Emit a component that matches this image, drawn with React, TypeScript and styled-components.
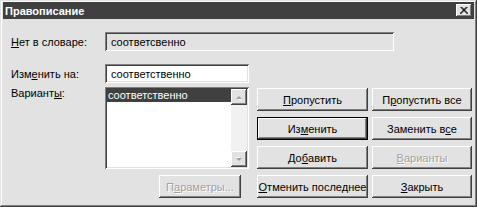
import styled, { createGlobalStyle, css } from "styled-components";

const FACE = "#e2e2e2";
const DARK = "#404040";
const SHADOW = "#808080";

const GlobalStyle = createGlobalStyle`
  html, body {
    margin: 0;
    padding: 0;
    background: ${FACE};
  }
  * {
    box-sizing: border-box;
  }
`;

const bevel = css`
  box-shadow: inset -1px -1px ${DARK}, inset 1px 1px #fff,
    inset -2px -2px ${SHADOW}, inset 2px 2px ${FACE};
`;

const sunken = css`
  box-shadow: inset 1px 1px ${SHADOW}, inset -1px -1px #fff,
    inset 2px 2px ${DARK}, inset -2px -2px ${FACE};
`;

const Window = styled.div`
  width: 477px;
  height: 207px;
  padding: 2px 3px 3px 3px;
  background: ${FACE};
  font-family: "Liberation Sans", Arial, sans-serif;
  font-size: 11px;
  color: #000;
  box-shadow: inset -1px -1px ${DARK}, inset 1px 1px ${FACE},
    inset -2px -2px ${SHADOW}, inset 2px 2px #fff;
  display: flex;
  flex-direction: column;
`;

const TitleBar = styled.div`
  height: 17px;
  background: ${DARK};
  display: flex;
  align-items: center;
  justify-content: space-between;
  padding: 0 2px 0 2px;
`;

const Title = styled.span`
  color: #fff;
  font-weight: bold;
  font-size: 11px;
`;

const CloseButton = styled.div`
  width: 16px;
  height: 13px;
  background: ${FACE};
  ${bevel};
  display: flex;
  align-items: center;
  justify-content: center;
`;

const Body = styled.div`
  flex: 1;
  padding: 13px 0 0 8px;
`;

const Row = styled.div<{ $gap?: number }>`
  display: flex;
  align-items: center;
  margin-bottom: ${(p) => p.$gap ?? 0}px;
`;

const TopRow = styled.div`
  display: flex;
  align-items: flex-start;
`;

const Label = styled.div`
  width: 94px;
  flex-shrink: 0;
  white-space: nowrap;
`;

const ReadField = styled.div`
  width: 289px;
  height: 19px;
  ${sunken};
  background: ${FACE};
  display: flex;
  align-items: center;
  padding: 0 6px;
`;

const TextInput = styled.div`
  width: 144px;
  height: 19px;
  ${sunken};
  background: #fff;
  display: flex;
  align-items: center;
  padding: 0 6px;
`;

const Main = styled.div`
  display: flex;
  margin-top: 13px;
`;

const LeftCol = styled.div`
  width: 238px;
  display: flex;
  flex-direction: column;
`;

const ListBox = styled.div`
  width: 144px;
  height: 82px;
  ${sunken};
  background: #fff;
  padding: 2px;
  display: flex;
`;

const ListItems = styled.div`
  flex: 1;
`;

const ListItem = styled.div<{ $selected?: boolean }>`
  height: 13px;
  line-height: 13px;
  padding-left: 1px;
  background: ${(p) => (p.$selected ? DARK : "transparent")};
  color: ${(p) => (p.$selected ? "#fff" : "#000")};
`;

const ScrollBar = styled.div`
  width: 16px;
  display: flex;
  flex-direction: column;
  justify-content: space-between;
  background: #f1f1f1;
`;

const ScrollArrow = styled.div`
  width: 16px;
  height: 16px;
  background: ${FACE};
  ${bevel};
  display: flex;
  align-items: center;
  justify-content: center;
`;

const ParamRow = styled.div`
  display: flex;
  justify-content: flex-end;
  padding-right: 8px;
  margin-top: 6px;
`;

const ButtonGrid = styled.div`
  margin-left: 8px;
  margin-top: 24px;
  display: grid;
  grid-template-columns: 111px 100px;
  grid-auto-rows: 23px;
  column-gap: 4px;
  row-gap: 6px;
`;

const Button = styled.div<{ $default?: boolean; $disabled?: boolean; $width?: number }>`
  height: 23px;
  width: ${(p) => (p.$width ? `${p.$width}px` : "auto")};
  background: ${FACE};
  display: flex;
  align-items: center;
  justify-content: center;
  white-space: nowrap;
  ${(p) =>
    p.$default
      ? css`
          box-shadow: inset 0 0 0 1px #000, inset -2px -2px ${DARK},
            inset 2px 2px #fff, inset -3px -3px ${SHADOW},
            inset 3px 3px ${FACE};
        `
      : bevel};
  ${(p) =>
    p.$disabled &&
    css`
      color: #a0a0a0;
      text-shadow: 1px 1px #fff;
    `}
`;

const Mn = styled.span`
  text-decoration: underline;
`;

function Arrow({ down }: { down?: boolean }) {
  return (
    <svg width="8" height="5" viewBox="0 0 8 5">
      <g transform={down ? "rotate(180 4 2.5)" : undefined}>
        <path d="M1.5 4.5 L4 1.5 L6.5 4.5 Z" fill="#fff" transform="translate(1 1)" />
        <path d="M1 4 L4 1 L7 4 Z" fill="#a0a0a0" />
      </g>
    </svg>
  );
}

export default function App() {
  return (
    <>
      <GlobalStyle />
      <Window>
        <TitleBar>
          <Title>Правописание</Title>
          <CloseButton>
            <svg width="8" height="7" viewBox="0 0 8 7">
              <path d="M0.5 0 L7.5 7 M1.5 0 L8.5 7 M7.5 0 L0.5 7 M6.5 0 L-0.5 7" stroke="#000" strokeWidth="1" />
            </svg>
          </CloseButton>
        </TitleBar>
        <Body>
          <Row>
            <Label>
              <Mn>Н</Mn>ет в словаре:
            </Label>
            <ReadField>соответсвенно</ReadField>
          </Row>
          <Main>
            <LeftCol>
              <Row $gap={4}>
                <Label>
                  Изм<Mn>е</Mn>нить на:
                </Label>
                <TextInput>соответственно</TextInput>
              </Row>
              <TopRow>
                <Label>
                  Вариант<Mn>ы</Mn>:
                </Label>
                <ListBox>
                  <ListItems>
                    <ListItem $selected>соответственно</ListItem>
                  </ListItems>
                  <ScrollBar>
                    <ScrollArrow>
                      <Arrow />
                    </ScrollArrow>
                    <ScrollArrow>
                      <Arrow down />
                    </ScrollArrow>
                  </ScrollBar>
                </ListBox>
              </TopRow>
              <ParamRow>
                <Button $disabled $width={82}>
                  П<Mn>а</Mn>раметры...
                </Button>
              </ParamRow>
            </LeftCol>
            <ButtonGrid>
              <Button>
                <Mn>П</Mn>ропустить
              </Button>
              <Button>
                П<Mn>р</Mn>опустить все
              </Button>
              <Button $default>
                Из<Mn>м</Mn>енить
              </Button>
              <Button>
                Заменить в<Mn>с</Mn>е
              </Button>
              <Button>
                До<Mn>б</Mn>авить
              </Button>
              <Button $disabled>
                <Mn>В</Mn>арианты
              </Button>
              <Button>
                <Mn>О</Mn>тменить последнее
              </Button>
              <Button>
                <Mn>З</Mn>акрыть
              </Button>
            </ButtonGrid>
          </Main>
        </Body>
      </Window>
    </>
  );
}
